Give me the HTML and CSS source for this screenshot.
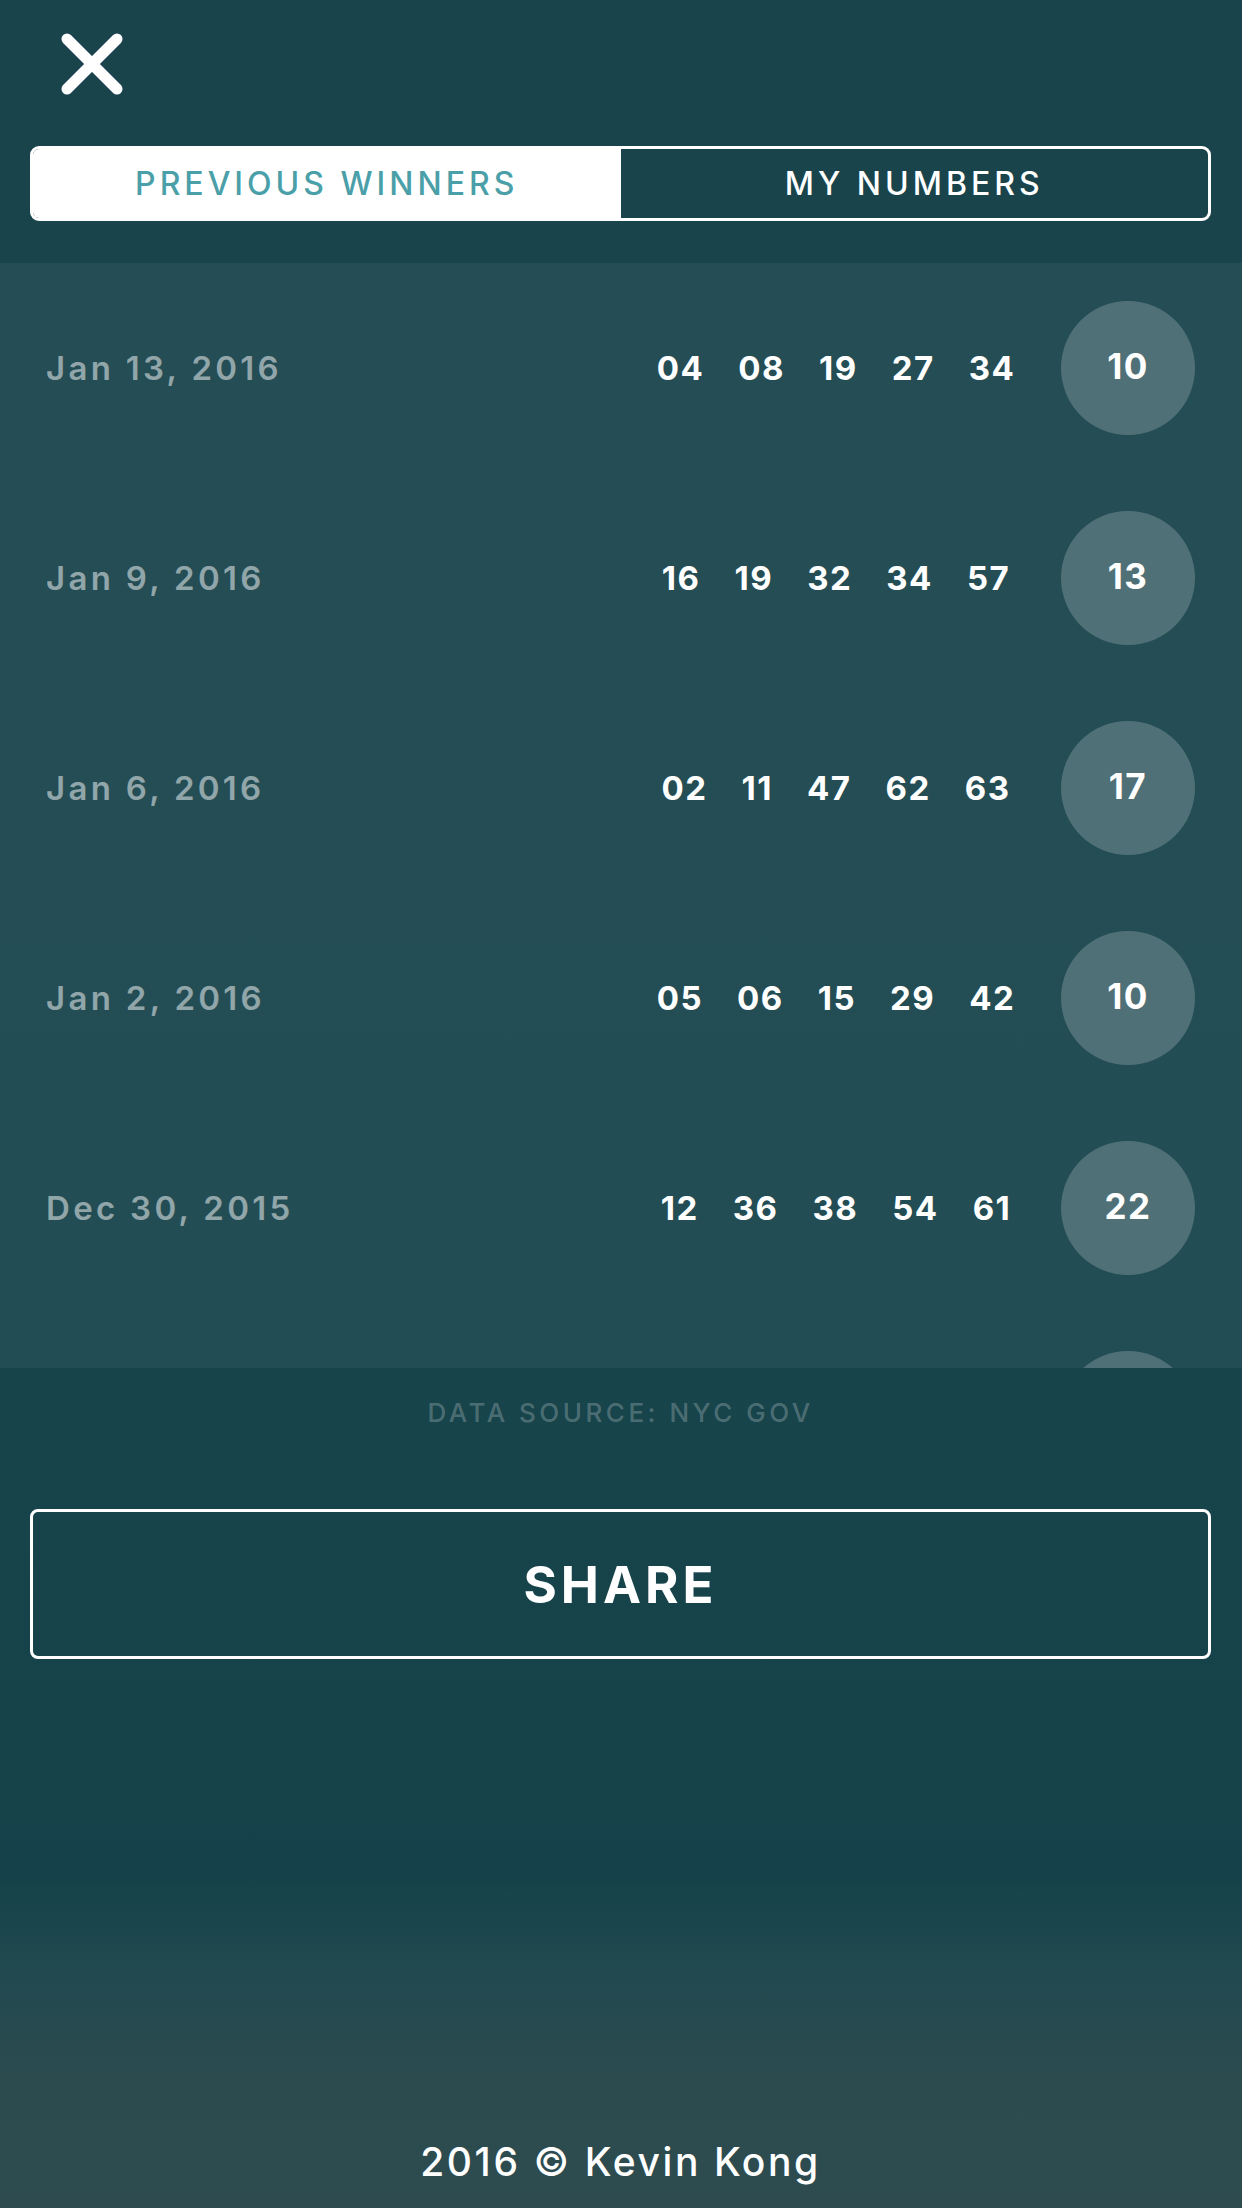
FILE: index.html
```html
<!DOCTYPE html>
<html>
<head>
<meta charset="utf-8">
<link rel="stylesheet" href="styles.css">
</head>
<body>
<div class="app">
  <header class="header">
    <div class="close">
      <svg width="64" height="64" viewBox="0 0 64 64"><path d="M7 7 L57 57 M57 7 L7 57" stroke="#fff" stroke-width="11" stroke-linecap="round" fill="none"/></svg>
    </div>
    <div class="tabs">
      <div class="tab active">PREVIOUS WINNERS</div>
      <div class="tab">MY NUMBERS</div>
    </div>
  </header>
  <section class="list">
    <div class="row">
      <div class="date">Jan 13, 2016</div>
      <div class="nums"><span>04</span><span>08</span><span>19</span><span>27</span><span>34</span></div>
      <div class="ball">10</div>
    </div>
    <div class="row">
      <div class="date">Jan 9, 2016</div>
      <div class="nums"><span>16</span><span>19</span><span>32</span><span>34</span><span>57</span></div>
      <div class="ball">13</div>
    </div>
    <div class="row">
      <div class="date">Jan 6, 2016</div>
      <div class="nums"><span>02</span><span>11</span><span>47</span><span>62</span><span>63</span></div>
      <div class="ball">17</div>
    </div>
    <div class="row">
      <div class="date">Jan 2, 2016</div>
      <div class="nums"><span>05</span><span>06</span><span>15</span><span>29</span><span>42</span></div>
      <div class="ball">10</div>
    </div>
    <div class="row">
      <div class="date">Dec 30, 2015</div>
      <div class="nums"><span>12</span><span>36</span><span>38</span><span>54</span><span>61</span></div>
      <div class="ball">22</div>
    </div>
    <div class="row">
      <div class="date"></div>
      <div class="nums"></div>
      <div class="ball"></div>
    </div>
  </section>
  <footer class="footer">
    <div class="source">DATA SOURCE: NYC GOV</div>
    <div class="share">SHARE</div>
    <div class="copy">2016 © Kevin Kong</div>
  </footer>
</div>
</body>
</html>
```

FILE: styles.css
```css
html, body {
  margin: 0;
  padding: 0;
}
body {
  width: 1242px;
  height: 2208px;
  overflow: hidden;
  font-family: "Inter", "Lato", "Liberation Sans", sans-serif;
  color: #fff;
  background: linear-gradient(to bottom, #1a444c 0%, #18444b 60%, #15424a 85%, #234a50 90%, #2b4b4f 94%, #2e4c50 100%);
}
.app {
  height: 2208px;
  display: flex;
  flex-direction: column;
}
.header {
  height: 263px;
  box-sizing: border-box;
  padding: 32px 31px 0 30px;
  display: flex;
  flex-direction: column;
}
.close {
  width: 64px;
  height: 64px;
  margin-left: 30px;
}
.close svg { display: block; }
.tabs {
  margin-top: 50px;
  height: 75px;
  box-sizing: border-box;
  border: 3px solid #fff;
  border-radius: 9px;
  display: flex;
  overflow: hidden;
}
.tab {
  flex: 1;
  display: flex;
  align-items: center;
  justify-content: center;
  font-size: 32px;
  font-weight: 500;
  letter-spacing: 4px;
  color: #fff;
}
.tab.active {
  background: #fff;
  color: #4a9fa8;
}
.list {
  height: 1105px;
  overflow: hidden;
  background: rgba(255, 255, 255, 0.05);
}
.row {
  height: 210px;
  box-sizing: border-box;
  padding: 0 47px 0 46px;
  display: grid;
  grid-template-columns: 1fr 392px 134px;
  column-gap: 29px;
  align-items: center;
}
.date {
  font-size: 33px;
  font-weight: 600;
  color: rgba(255, 255, 255, 0.5);
  letter-spacing: 3.3px;
}
.nums {
  display: flex;
  justify-content: center;
  gap: 34px;
  font-size: 33px;
  font-weight: 700;
  letter-spacing: 1.5px;
}
.ball {
  width: 134px;
  height: 134px;
  border-radius: 50%;
  background: rgba(255, 255, 255, 0.2);
  display: flex;
  align-items: center;
  justify-content: center;
  font-size: 35px;
  font-weight: 700;
  letter-spacing: 1.5px;
  padding-bottom: 4px;
  box-sizing: border-box;
}
.footer {
  flex: 1;
  display: flex;
  flex-direction: column;
  align-items: stretch;
  padding: 0 31px 0 30px;
}
.source {
  margin-top: 31px;
  text-align: center;
  font-size: 26px;
  line-height: 28px;
  font-weight: 500;
  color: rgba(255, 255, 255, 0.24);
  letter-spacing: 3.5px;
}
.share {
  margin-top: 82px;
  height: 150px;
  box-sizing: border-box;
  border: 3px solid #fff;
  border-radius: 8px;
  display: flex;
  align-items: center;
  justify-content: center;
  font-size: 51px;
  font-weight: 700;
  letter-spacing: 4px;
}
.copy {
  margin-top: auto;
  margin-bottom: 22px;
  text-align: center;
  font-size: 39px;
  line-height: 48px;
  font-weight: 500;
  letter-spacing: 2.6px;
}
```
